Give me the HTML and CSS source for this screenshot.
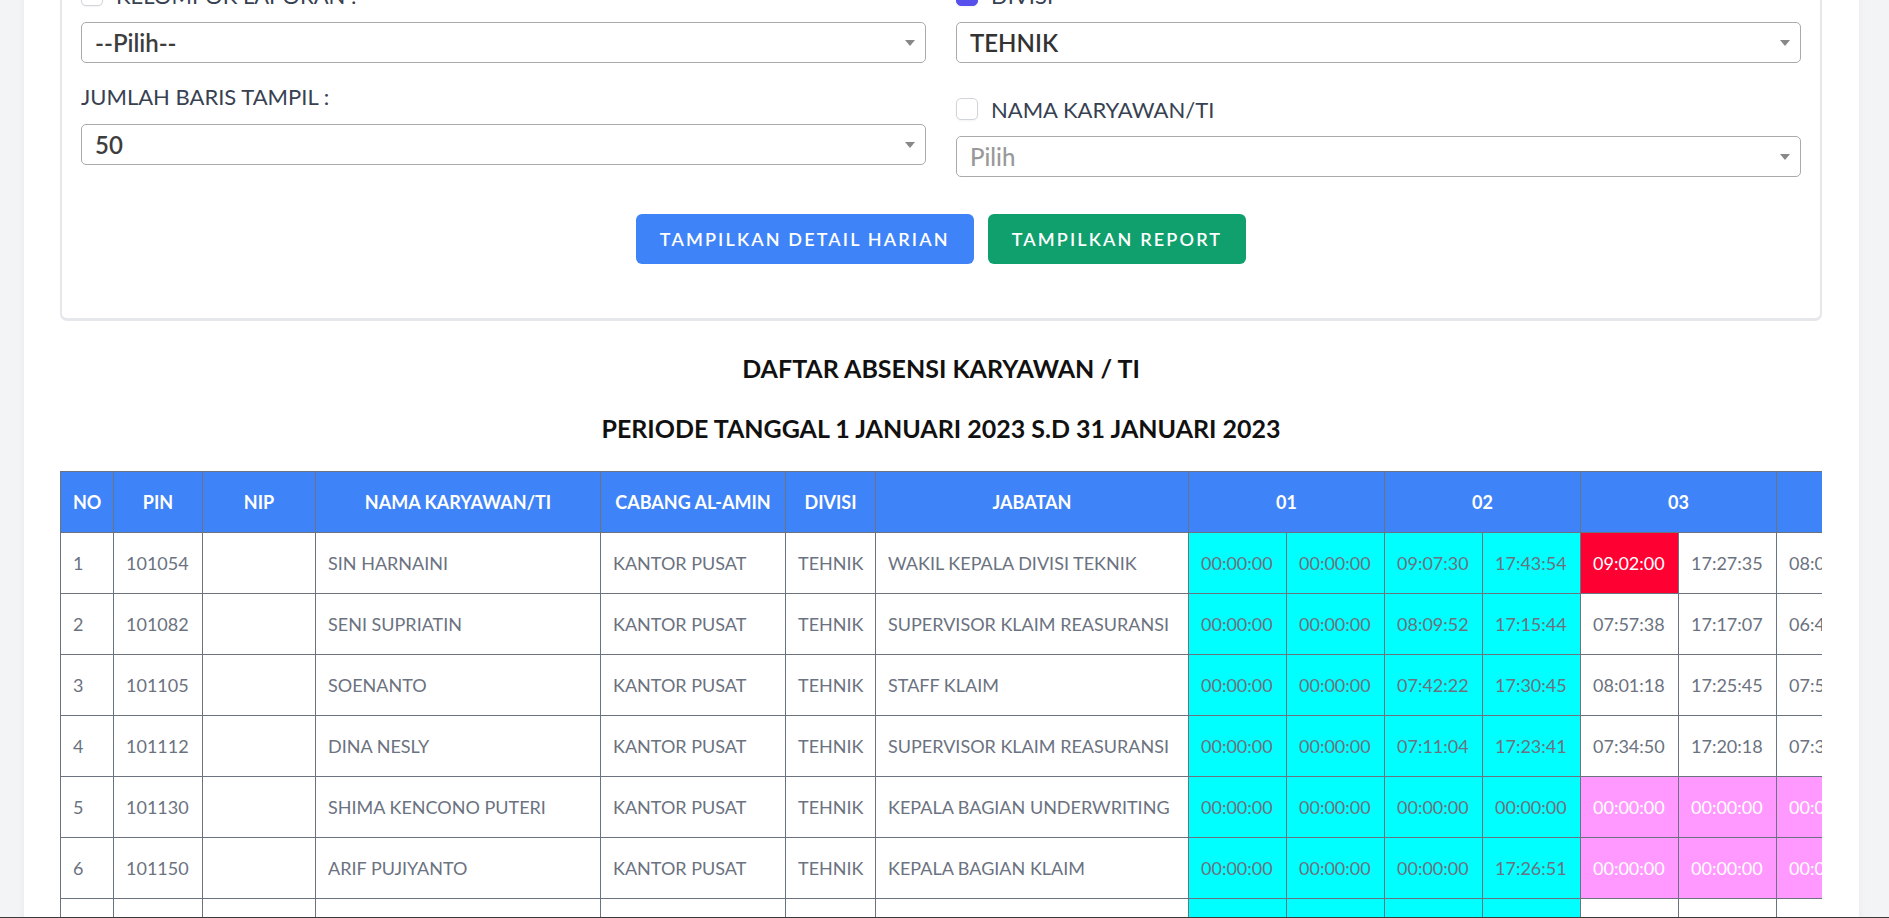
FILE: index.html
```html
<!DOCTYPE html>
<html lang="id">
<head>
<meta charset="utf-8">
<title>Daftar Absensi Karyawan</title>
<link rel="stylesheet" href="styles.css">
</head>
<body>
<div class="page">
  <div class="card">
    <div class="form-grid">
      <div class="col">
        <label class="check-label"><span class="checkbox"></span>KELOMPOK LAPORAN :</label>
        <div class="select select-first"><span class="select-value">--Pilih--</span><span class="arrow"></span></div>
        <div class="plain-label">JUMLAH BARIS TAMPIL :</div>
        <div class="select select-after-plain"><span class="select-value">50</span><span class="arrow"></span></div>
      </div>
      <div class="col">
        <label class="check-label"><span class="checkbox checked"></span>DIVISI</label>
        <div class="select select-first"><span class="select-value strong">TEHNIK</span><span class="arrow"></span></div>
        <label class="check-label second"><span class="checkbox"></span>NAMA KARYAWAN/TI</label>
        <div class="select select-first"><span class="select-value placeholder">Pilih</span><span class="arrow"></span></div>
      </div>
    </div>
    <div class="actions">
      <button class="btn btn-blue">TAMPILKAN DETAIL HARIAN</button>
      <button class="btn btn-green">TAMPILKAN REPORT</button>
    </div>
  </div>

  <h2 class="title">DAFTAR ABSENSI KARYAWAN / TI</h2>
  <h3 class="subtitle">PERIODE TANGGAL 1 JANUARI 2023 S.D 31 JANUARI 2023</h3>

  <div class="table-wrap">
    <table class="report">
      <colgroup>
        <col class="w-no"><col class="w-pin"><col class="w-nip"><col class="w-nama"><col class="w-cabang"><col class="w-divisi"><col class="w-jabatan">
        <col class="w-time"><col class="w-time"><col class="w-time"><col class="w-time"><col class="w-time"><col class="w-time"><col class="w-time"><col class="w-time">
      </colgroup>
      <thead>
        <tr>
          <th>NO</th><th>PIN</th><th>NIP</th><th>NAMA KARYAWAN/TI</th><th>CABANG AL-AMIN</th><th>DIVISI</th><th>JABATAN</th>
          <th colspan="2">01</th><th colspan="2">02</th><th colspan="2">03</th><th colspan="2">04</th>
        </tr>
      </thead>
      <tbody>
        <tr>
          <td>1</td><td>101054</td><td></td><td>SIN HARNAINI</td><td>KANTOR PUSAT</td><td>TEHNIK</td><td>WAKIL KEPALA DIVISI TEKNIK</td>
          <td class="c-off">00:00:00</td><td class="c-off">00:00:00</td><td class="c-off">09:07:30</td><td class="c-off">17:43:54</td>
          <td class="c-late">09:02:00</td><td>17:27:35</td><td>08:01:47</td><td>17:22:10</td>
        </tr>
        <tr>
          <td>2</td><td>101082</td><td></td><td>SENI SUPRIATIN</td><td>KANTOR PUSAT</td><td>TEHNIK</td><td>SUPERVISOR KLAIM REASURANSI</td>
          <td class="c-off">00:00:00</td><td class="c-off">00:00:00</td><td class="c-off">08:09:52</td><td class="c-off">17:15:44</td>
          <td>07:57:38</td><td>17:17:07</td><td>06:48:21</td><td>17:10:33</td>
        </tr>
        <tr>
          <td>3</td><td>101105</td><td></td><td>SOENANTO</td><td>KANTOR PUSAT</td><td>TEHNIK</td><td>STAFF KLAIM</td>
          <td class="c-off">00:00:00</td><td class="c-off">00:00:00</td><td class="c-off">07:42:22</td><td class="c-off">17:30:45</td>
          <td>08:01:18</td><td>17:25:45</td><td>07:52:09</td><td>17:28:14</td>
        </tr>
        <tr>
          <td>4</td><td>101112</td><td></td><td>DINA NESLY</td><td>KANTOR PUSAT</td><td>TEHNIK</td><td>SUPERVISOR KLAIM REASURANSI</td>
          <td class="c-off">00:00:00</td><td class="c-off">00:00:00</td><td class="c-off">07:11:04</td><td class="c-off">17:23:41</td>
          <td>07:34:50</td><td>17:20:18</td><td>07:31:26</td><td>17:19:02</td>
        </tr>
        <tr>
          <td>5</td><td>101130</td><td></td><td>SHIMA KENCONO PUTERI</td><td>KANTOR PUSAT</td><td>TEHNIK</td><td>KEPALA BAGIAN UNDERWRITING</td>
          <td class="c-off">00:00:00</td><td class="c-off">00:00:00</td><td class="c-off">00:00:00</td><td class="c-off">00:00:00</td>
          <td class="c-leave">00:00:00</td><td class="c-leave">00:00:00</td><td class="c-leave">00:00:00</td><td class="c-leave">00:00:00</td>
        </tr>
        <tr>
          <td>6</td><td>101150</td><td></td><td>ARIF PUJIYANTO</td><td>KANTOR PUSAT</td><td>TEHNIK</td><td>KEPALA BAGIAN KLAIM</td>
          <td class="c-off">00:00:00</td><td class="c-off">00:00:00</td><td class="c-off">00:00:00</td><td class="c-off">17:26:51</td>
          <td class="c-leave">00:00:00</td><td class="c-leave">00:00:00</td><td class="c-leave">00:00:00</td><td class="c-leave">00:00:00</td>
        </tr>
        <tr>
          <td>7</td><td>101167</td><td></td><td>RUDI HARTONO</td><td>KANTOR PUSAT</td><td>TEHNIK</td><td>STAFF UNDERWRITING</td>
          <td class="c-off">00:00:00</td><td class="c-off">00:00:00</td><td class="c-off">07:48:15</td><td class="c-off">17:12:40</td>
          <td>07:45:03</td><td>17:14:56</td><td>07:40:11</td><td>17:16:29</td>
        </tr>
        <tr>
          <td>8</td><td>101172</td><td></td><td>DEWI LESTARI</td><td>KANTOR PUSAT</td><td>TEHNIK</td><td>STAFF KLAIM</td>
          <td class="c-off">00:00:00</td><td class="c-off">00:00:00</td><td class="c-off">07:55:42</td><td class="c-off">17:05:18</td>
          <td>07:50:27</td><td>17:09:33</td><td>07:47:58</td><td>17:11:06</td>
        </tr>
      </tbody>
    </table>
  </div>
</div>
</body>
</html>
```

FILE: styles.css
```css
* { box-sizing: border-box; }

html, body {
  margin: 0;
  padding: 0;
}

body {
  background: #f3f4f6;
  font-family: "Lato", "Open Sans", sans-serif;
  color: #374151;
  overflow: hidden;
}

body::after {
  content: "";
  position: fixed;
  left: 0;
  right: 0;
  bottom: 0;
  height: 1px;
  background: #3a3a3a;
}

.page {
  margin: -39px 30px 0 24px;
  padding: 0 37px 40px 36px;
  background: #ffffff;
  box-shadow: 0 0 8px rgba(0, 0, 0, 0.05);
  min-height: 1200px;
}

/* ---------- filter card ---------- */
.card {
  border: 2px solid #e5e7eb;
  border-bottom-width: 3px;
  border-radius: 7px;
  padding: 20px 19px 54px 19px;
  background: #fff;
}

.form-grid {
  display: grid;
  grid-template-columns: 1fr 1fr;
  column-gap: 30px;
}

.col {
  display: flex;
  flex-direction: column;
}

.check-label {
  display: flex;
  align-items: center;
  height: 24px;
  font-size: 22px;
  color: #374151;
  gap: 13px;
}

.check-label.second {
  margin-top: 34px;
}

.checkbox {
  width: 22px;
  height: 22px;
  border: 1px solid #d1d5db;
  border-radius: 5px;
  background: #fff;
  box-shadow: 0 1px 2px rgba(0, 0, 0, 0.05);
  flex: none;
}

.checkbox.checked {
  background: #5850ec;
  border-color: #5850ec;
}

.plain-label {
  margin-top: 22px;
  height: 24px;
  line-height: 24px;
  font-size: 22px;
  color: #374151;
}

.select {
  height: 41px;
  border: 1px solid #aaaaaa;
  border-radius: 5px;
  display: flex;
  align-items: center;
  justify-content: space-between;
  padding: 0 10px 0 13px;
  background: #fff;
}

.select-first { margin-top: 15px; }
.select-after-plain { margin-top: 15px; }

.select-value {
  font-size: 24px;
  color: #3d3d3d;
  font-weight: 600;
}

.select-value.strong { font-weight: 600; color: #333; }
.select-value.placeholder { color: #999; font-weight: 500; }

.arrow {
  width: 0;
  height: 0;
  border-top: 6px solid #888;
  border-left: 5px solid transparent;
  border-right: 5px solid transparent;
}

.actions {
  display: flex;
  justify-content: center;
  gap: 14px;
  margin-top: 37px;
}

.btn {
  height: 50px;
  padding: 0 24px;
  border: none;
  border-radius: 6px;
  color: #fff;
  font-family: inherit;
  font-size: 18px;
  font-weight: 600;
  letter-spacing: 0.12em;
}

.btn-blue { background: #3f83f8; }
.btn-green { background: #10a06e; }

/* ---------- titles ---------- */
.title,
.subtitle {
  margin: 0;
  text-align: center;
  font-size: 25px;
  line-height: 28px;
  font-weight: 700;
  color: #111;
}

.title { margin-top: 33px; }
.subtitle { margin-top: 32px; }

/* ---------- table ---------- */
.table-wrap {
  margin-top: 29px;
  overflow: hidden;
}

.report {
  border-collapse: collapse;
  table-layout: fixed;
  width: 1912px;
  font-size: 18px;
}

.w-no { width: 53px; }
.w-pin { width: 89px; }
.w-nip { width: 113px; }
.w-nama { width: 285px; }
.w-cabang { width: 185px; }
.w-divisi { width: 90px; }
.w-jabatan { width: 313px; }
.w-time { width: 98px; }

.report th,
.report td {
  border: 1px solid #6b7280;
  padding: 16px 12px;
  line-height: 28px;
  white-space: nowrap;
  overflow: hidden;
}

.report th {
  background: #3f83f8;
  color: #fff;
  font-weight: 700;
  text-align: center;
}

.report td {
  color: #6b7280;
  text-align: left;
}

.report td.c-off { background: #00ffff; }
.report td.c-late { background: #ff0033; color: #fff; }
.report td.c-leave { background: #ff99ff; color: #fff; }
```
